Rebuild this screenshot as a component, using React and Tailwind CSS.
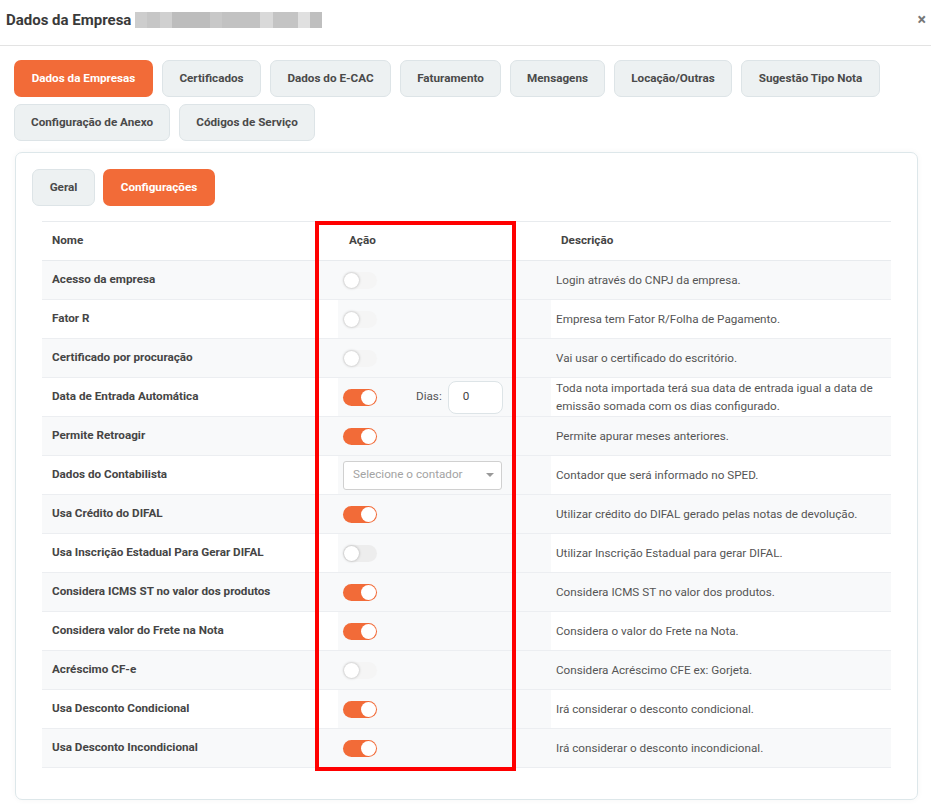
import React from 'react';

const topTabs = [
    { label: 'Dados da Empresas', w: 'w-[139px]', active: true },
    { label: 'Certificados', w: 'w-[99px]' },
    { label: 'Dados do E-CAC', w: 'w-[121px]' },
    { label: 'Faturamento', w: 'w-[101px]' },
    { label: 'Mensagens', w: 'w-[95px]' },
    { label: 'Locação/Outras', w: 'w-[118px]' },
    { label: 'Sugestão Tipo Nota', w: 'w-[139px]' },
    { label: 'Configuração de Anexo', w: 'w-[156px]' },
    { label: 'Códigos de Serviço', w: 'w-[136px]' },
];

const rows = [
    { nome: 'Acesso da empresa', on: false, desc: 'Login através do CNPJ da empresa.' },
    { nome: 'Fator R', on: false, desc: 'Empresa tem Fator R/Folha de Pagamento.' },
    { nome: 'Certificado por procuração', on: false, desc: 'Vai usar o certificado do escritório.' },
    { nome: 'Data de Entrada Automática', on: true, dias: true, desc: 'Toda nota importada terá sua data de entrada igual a data de emissão somada com os dias configurado.' },
    { nome: 'Permite Retroagir', on: true, desc: 'Permite apurar meses anteriores.' },
    { nome: 'Dados do Contabilista', select: true, desc: 'Contador que será informado no SPED.' },
    { nome: 'Usa Crédito do DIFAL', on: true, desc: 'Utilizar crédito do DIFAL gerado pelas notas de devolução.' },
    { nome: 'Usa Inscrição Estadual Para Gerar DIFAL', on: false, dim: true, desc: 'Utilizar Inscrição Estadual para gerar DIFAL.' },
    { nome: 'Considera ICMS ST no valor dos produtos', on: true, desc: 'Considera ICMS ST no valor dos produtos.' },
    { nome: 'Considera valor do Frete na Nota', on: true, desc: 'Considera o valor do Frete na Nota.' },
    { nome: 'Acréscimo CF-e', on: false, desc: 'Considera Acréscimo CFE ex: Gorjeta.' },
    { nome: 'Usa Desconto Condicional', on: true, desc: 'Irá considerar o desconto condicional.' },
    { nome: 'Usa Desconto Incondicional', on: true, desc: 'Irá considerar o desconto incondicional.' },
];

const Toggle = ({ on, dim }) => (
    <div className={`relative w-[34px] h-[17px] rounded-full ${on ? 'bg-[#f26b38]' : dim ? 'bg-[#ededed]' : 'bg-[#f5f5f5]'}`}>
        <div className={`absolute top-[1px] w-[15px] h-[15px] rounded-full bg-white ${on ? 'right-[1px]' : 'left-[1px] shadow-[0_0_3px_rgba(0,0,0,0.3)]'}`} />
    </div>
);

const App = () => {
    return (
        <div className="w-[931px] h-[808px] bg-white overflow-hidden text-[#444] font-['Roboto','Liberation_Sans',sans-serif]">
            {/* header */}
            <div className="flex items-start justify-between h-[46px] border-b border-[#e3e3e3] pl-[6px] pr-[5px] pt-[9px]">
                <div className="flex items-center">
                    <span className="text-[15px] font-bold text-[#3a3a3a]">Dados da Empresa</span>
                    <div className="flex ml-[4px] h-[16px]">
                        <div className="w-[12px] bg-[#cdcdcd]" />
                        <div className="w-[13px] bg-[#c6c6c6]" />
                        <div className="w-[12px] bg-[#d0d0d0]" />
                        <div className="w-[38px] bg-[#bdbdbd]" />
                        <div className="w-[12px] bg-[#c8c8c8]" />
                        <div className="w-[38px] bg-[#c2c2c2]" />
                        <div className="w-[13px] bg-[#d9d9d9]" />
                        <div className="w-[25px] bg-[#c4c4c4]" />
                        <div className="w-[12px] bg-[#e0e0e0]" />
                        <div className="w-[12px] bg-[#bfbfbf]" />
                    </div>
                </div>
                <span className="text-[16px] font-bold text-[#777] leading-[22px]">×</span>
            </div>

            {/* top tabs */}
            <div className="flex flex-wrap gap-x-[9px] gap-y-[7px] pl-[14px] pt-[14px] w-[900px]">
                {topTabs.map(t => (
                    <div
                        key={t.label}
                        className={`${t.w} h-[37px] flex items-center justify-center rounded-[7px] text-[11.7px] font-bold ${t.active ? 'bg-[#f26b38] text-white' : 'bg-[#edf1f2] border border-[#dde4e7] text-[#4a4a4a]'}`}
                    >
                        {t.label}
                    </div>
                ))}
            </div>

            {/* card */}
            <div className="relative ml-[15px] mt-[11px] w-[903px] h-[648px] rounded-[7px] border border-[#dde7ea] shadow-[0_0_6px_rgba(0,0,0,0.04)] pt-[16px] pl-[16px]">
                <div className="flex gap-[8px]">
                    <div className="w-[63px] h-[37px] flex items-center justify-center rounded-[7px] bg-[#edf1f2] border border-[#dde4e7] text-[11.7px] font-bold text-[#4a4a4a]">Geral</div>
                    <div className="w-[112px] h-[37px] flex items-center justify-center rounded-[7px] bg-[#f26b38] text-[11.7px] font-bold text-white">Configurações</div>
                </div>

                <table className="ml-[10px] mt-[15px] w-[849px] border-collapse table-fixed text-[11.7px]">
                    <colgroup>
                        <col className="w-[296px]" />
                        <col className="w-[213px]" />
                        <col className="w-[340px]" />
                    </colgroup>
                    <thead>
                        <tr className="h-[39px] border-t border-b border-[#e8ebee]">
                            <th className="text-left font-bold text-[#444] pl-[10px]">Nome</th>
                            <th className="text-left font-bold text-[#444] pl-[11px]">Ação</th>
                            <th className="text-left font-bold text-[#444] pl-[10px]">Descrição</th>
                        </tr>
                    </thead>
                    <tbody>
                        {rows.map((r, i) => (
                            <tr key={r.nome} className={`h-[39px] border-b border-[#eceef1] ${i % 2 === 0 ? 'bg-[#f8f9fa]' : 'bg-white'}`}>
                                <td className="pl-[10px] font-bold text-[#454545] align-middle">{r.nome}</td>
                                <td className="pl-[5px] bg-[#f8f9fa] align-middle">
                                    {r.select ? (
                                        <div className="w-[159px] h-[29px] rounded-[3px] border border-[#d0d0d0] bg-white flex items-center justify-between pl-[9px] pr-[7px] text-[#a3a3a3]">
                                            <span>Selecione o contador</span>
                                            <span className="w-0 h-0 border-l-[4px] border-r-[4px] border-t-[4px] border-l-transparent border-r-transparent border-t-[#999]" />
                                        </div>
                                    ) : r.dias ? (
                                        <div className="flex items-center">
                                            <Toggle on={r.on} />
                                            <span className="ml-[39px] text-[#555]">Dias:</span>
                                            <div className="ml-[6px] w-[55px] h-[33px] rounded-[8px] border border-[#dde4e7] bg-white flex items-center pl-[14px] text-[#444]">0</div>
                                        </div>
                                    ) : (
                                        <Toggle on={r.on} dim={r.dim} />
                                    )}
                                </td>
                                <td className="pl-[5px] pr-[8px] text-[#555] leading-[18px] align-middle">{r.desc}</td>
                            </tr>
                        ))}
                    </tbody>
                </table>

                {/* highlight annotation */}
                <div className="absolute left-[299px] top-[68px] w-[201px] h-[550px] border-[4px] border-[#ff0000] pointer-events-none" />
            </div>
        </div>
    );
};

export default App;
